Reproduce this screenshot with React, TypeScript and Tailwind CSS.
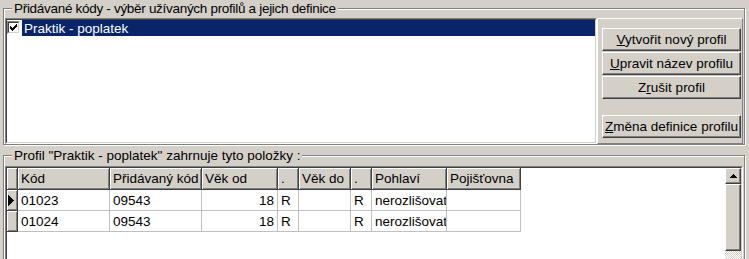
import React from "react";

const raised =
  "border border-t-white border-l-white border-b-[#404040] border-r-[#404040] shadow-[inset_-1px_-1px_0_#808080]";

function Btn({ children, className = "" }: { children: React.ReactNode; className?: string }) {
  return (
    <div
      className={`w-[139px] h-[23px] bg-[#d4d0c8] flex items-center justify-center pt-[1px] ${raised} ${className}`}
    >
      <span className="whitespace-nowrap">{children}</span>
    </div>
  );
}

type Col = { w: string; label: string; align?: "right" };
const cols: Col[] = [
  { w: "w-[92px]", label: "Kód" },
  { w: "w-[92px]", label: "Přidávaný kód" },
  { w: "w-[76px]", label: "Věk od", align: "right" },
  { w: "w-[21px]", label: "." },
  { w: "w-[52px]", label: "Věk do" },
  { w: "w-[21px]", label: "." },
  { w: "w-[75px]", label: "Pohlaví" },
  { w: "w-[74px]", label: "Pojišťovna" },
];

const rows = [
  ["01023", "09543", "18", "R", "", "R", "nerozlišovat", ""],
  ["01024", "09543", "18", "R", "", "R", "nerozlišovat", ""],
];

const hdrCell =
  "h-[22px] bg-[#d4d0c8] border-r border-b border-r-[#404040] border-b-[#404040] shadow-[inset_1px_1px_0_#fff,inset_-1px_-1px_0_#808080] flex items-center pl-[3px] pt-[1px] overflow-hidden whitespace-nowrap shrink-0";

export default function App() {
  return (
    <div className="w-[749px] h-[259px] overflow-hidden bg-[#d4d0c8] text-black text-[13.5px] leading-[16px] [font-family:'Liberation_Sans',Arial,sans-serif] pl-[3px]">
      {/* Group 1 */}
      <fieldset className="w-[742px] m-0 px-[1px] pb-0 pt-0 border border-[#808080] shadow-[inset_1px_1px_0_#fff,1px_1px_0_#fff] min-w-0">
        <legend className="ml-[7px] px-[2px] leading-[17px] bg-[#d4d0c8] tracking-[-0.3px]">
          Přidávané kódy - výběr užívaných profilů a jejich definice
        </legend>
        <div className="flex pt-[1px]">
          {/* listbox */}
          <div className="w-[592px] h-[126px] border border-t-[#808080] border-l-[#808080] border-b-white border-r-white">
            <div className="h-full bg-white border border-t-[#404040] border-l-[#404040] border-b-[#d4d0c8] border-r-[#d4d0c8]">
              <div className="flex h-[16px]">
                <div className="w-[15px] shrink-0 pt-[1px]">
                  <div className="w-[13px] h-[13px] bg-white border border-t-[#808080] border-l-[#808080] border-b-white border-r-white">
                    <div className="w-full h-full border border-t-[#404040] border-l-[#404040] border-b-[#d4d0c8] border-r-[#d4d0c8] flex items-center justify-center">
                      <svg width="9" height="9" viewBox="0 0 9 9" shapeRendering="crispEdges">
                        <path
                          d="M1 3h1v1h1v1h1V4h1V3h1V2h1V1h1v3H7v1H6v1H5v1H4v1H3V7H2V6H1z"
                          fill="#000"
                        />
                      </svg>
                    </div>
                  </div>
                </div>
                <div className="flex-1 bg-[#0a246a] text-white pl-[2px] flex items-center pt-[1px] whitespace-nowrap">
                  Praktik - poplatek
                </div>
              </div>
            </div>
          </div>
          {/* button panel */}
          <div className="w-[146px] border border-t-white border-l-white border-b-[#808080] border-r-[#808080] pl-[4px] pt-[9px] flex flex-col">
            <Btn>
              <u>V</u>ytvořit nový profil
            </Btn>
            <Btn className="mt-[1px]">
              <u>U</u>pravit název profilu
            </Btn>
            <Btn className="mt-[1px]">
              Z<u>r</u>ušit profil
            </Btn>
            <Btn className="mt-[16px]">
              <u>Z</u>měna definice profilu
            </Btn>
          </div>
        </div>
      </fieldset>

      {/* Group 2 */}
      <fieldset className="w-[742px] mt-[2px] m-0 px-[1px] pb-0 pt-0 border border-[#808080] shadow-[inset_1px_1px_0_#fff,1px_1px_0_#fff] min-w-0">
        <legend className="ml-[7px] px-[2px] leading-[17px] bg-[#d4d0c8]">
          Profil "Praktik - poplatek" zahrnuje tyto položky :
        </legend>
        <div className="pt-[2px]">
          <div className="h-[110px] border border-t-[#808080] border-l-[#808080] border-b-white border-r-white">
            <div className="h-full bg-white border border-t-[#404040] border-l-[#404040] border-b-[#d4d0c8] border-r-[#d4d0c8] flex">
              {/* table */}
              <div className="flex-1 flex flex-col">
                <div className="flex">
                  <div className={`w-[11px] ${hdrCell}`} />
                  {cols.map((c, i) => (
                    <div key={i} className={`${c.w} ${hdrCell}`}>
                      {c.label}
                    </div>
                  ))}
                </div>
                {rows.map((r, ri) => (
                  <div key={ri} className="flex">
                    <div className="w-[11px] h-[21px] shrink-0 bg-[#d4d0c8] border-r border-b border-r-[#404040] border-b-[#404040] shadow-[inset_1px_1px_0_#fff,inset_-1px_-1px_0_#808080] flex items-center pl-[1px]">
                      {ri === 0 && (
                        <svg width="6" height="11" viewBox="0 0 6 11" shapeRendering="crispEdges">
                          <path d="M0 0h1v1h1v1h1v1h1v1h1v1h1v1H5v1H4v1H3v1H2v1H1v1H0z" fill="#000" />
                        </svg>
                      )}
                    </div>
                    {cols.map((c, ci) => (
                      <div
                        key={ci}
                        className={`${c.w} h-[21px] shrink-0 border-r border-b border-[#c0c0c0] flex items-center overflow-hidden whitespace-nowrap pt-[1px] ${
                          c.align === "right" ? "justify-end pr-[3px]" : "pl-[3px]"
                        }`}
                      >
                        {r[ci]}
                      </div>
                    ))}
                  </div>
                ))}
              </div>
              {/* scrollbar */}
              <div className="w-[16px] shrink-0 flex flex-col">
                <div className={`h-[16px] bg-[#d4d0c8] flex items-center justify-center ${raised}`}>
                  <svg width="7" height="4" viewBox="0 0 7 4" shapeRendering="crispEdges">
                    <path d="M3 0h1v1h1v1h1v1h1v1H0V3h1V2h1V1h1z" fill="#000" />
                  </svg>
                </div>
                <div className={`h-[67px] bg-[#d4d0c8] ${raised}`} />
                <div className="flex-1 bg-[repeating-conic-gradient(#fff_0%_25%,#d4d0c8_0%_50%)] bg-size-[2px_2px]" />
              </div>
            </div>
          </div>
        </div>
      </fieldset>
    </div>
  );
}
